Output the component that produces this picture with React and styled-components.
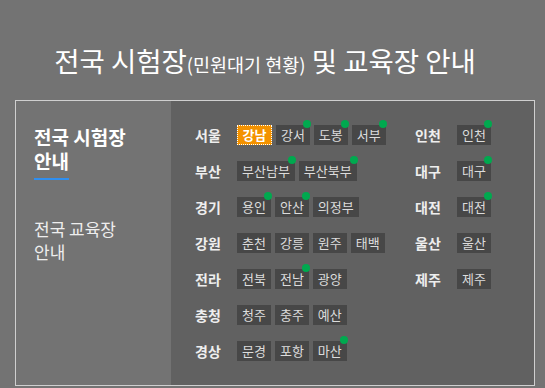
import React from "react";
import styled, { createGlobalStyle } from "styled-components";

const GlobalStyle = createGlobalStyle`
  html, body { margin: 0; padding: 0; }
  body {
    background: #737373;
    font-family: "Noto Sans CJK KR", "Noto Sans", sans-serif;
  }
`;

const Page = styled.div`
  width: 545px;
  height: 388px;
  padding: 0 10px 0 15px;
  box-sizing: border-box;
  overflow: hidden;
`;

const Title = styled.h1`
  margin: 0;
  height: 100px;
  padding: 43px 20px 0 0;
  box-sizing: border-box;
  text-align: center;
  font-size: 27.5px;
  font-weight: 400;
  line-height: 34px;
  color: #fff;
  white-space: nowrap;
`;

const Small = styled.span`
  font-size: 18.5px;
`;

const Box = styled.div`
  display: flex;
  width: 520px;
  height: 286px;
  box-sizing: border-box;
  border: 1px solid #cfcfcf;
`;

const Sidebar = styled.nav`
  width: 155px;
  flex: none;
  padding: 24px 0 0 18px;
  box-sizing: border-box;
  display: flex;
  flex-direction: column;
  gap: 37px;
`;

const MenuItem = styled.div`
  font-size: ${(p) => (p.$active ? "19px" : "17px")};
  font-weight: ${(p) => (p.$active ? 700 : 400)};
  line-height: ${(p) => (p.$active ? "24px" : "23px")};
  color: ${(p) => (p.$active ? "#fff" : "#eee")};
`;

const Underlined = styled.span`
  display: inline-block;
  line-height: 22px;
  padding-bottom: 6px;
  border-bottom: 2px solid #2f8ff0;
`;

const Panel = styled.div`
  flex: 1;
  background: #616161;
  padding: 24px 0 0 24px;
  display: flex;
`;

const Column = styled.div`
  width: ${(p) => p.$width || "auto"};
  display: flex;
  flex-direction: column;
  gap: 16px;
`;

const Region = styled.div`
  display: flex;
  align-items: center;
  height: 20px;
`;

const Label = styled.span`
  width: 42px;
  flex: none;
  font-size: 14px;
  font-weight: 700;
  color: #eee;
`;

const Chips = styled.div`
  display: flex;
  gap: 4px;
`;

const Chip = styled.span`
  position: relative;
  height: 20px;
  box-sizing: border-box;
  line-height: ${(p) => (p.$selected ? "18px" : "20px")};
  font-size: 13px;
  background: ${(p) => (p.$selected ? "#f39200" : "#474747")};
  color: ${(p) => (p.$selected ? "#fff" : "#dcdcdc")};
  font-weight: ${(p) => (p.$selected ? 700 : 400)};
  border: ${(p) => (p.$selected ? "1px dotted #fff" : "none")};
  padding: ${(p) => (p.$selected ? "0 4.5px" : "0 5px")};
`;

const Dot = styled.i`
  position: absolute;
  top: -5px;
  right: -1px;
  width: 8px;
  height: 8px;
  border-radius: 50%;
  background: #00a94f;
`;

const left = [
  ["서울", [["강남", 0, 1], ["강서", 1], ["도봉", 1], ["서부", 1]]],
  ["부산", [["부산남부", 1], ["부산북부", 1]]],
  ["경기", [["용인", 1], ["안산", 1], ["의정부", 0]]],
  ["강원", [["춘천"], ["강릉"], ["원주"], ["태백"]]],
  ["전라", [["전북"], ["전남", 1], ["광양"]]],
  ["충청", [["청주"], ["충주"], ["예산"]]],
  ["경상", [["문경"], ["포항"], ["마산", 1]]],
];

const right = [
  ["인천", [["인천", 1]]],
  ["대구", [["대구", 1]]],
  ["대전", [["대전", 1]]],
  ["울산", [["울산"]]],
  ["제주", [["제주"]]],
];

function RegionRow({ name, items }) {
  return (
    <Region>
      <Label>{name}</Label>
      <Chips>
        {items.map(([t, dot, sel]) => (
          <Chip key={t} $selected={!!sel}>
            {t}
            {dot ? <Dot /> : null}
          </Chip>
        ))}
      </Chips>
    </Region>
  );
}

export default function App() {
  return (
    <>
      <GlobalStyle />
      <Page>
        <Title>
          전국 시험장<Small>(민원대기 현황)</Small> 및 교육장 안내
        </Title>
        <Box>
          <Sidebar>
            <MenuItem $active>
              전국 시험장
              <br />
              <Underlined>안내</Underlined>
            </MenuItem>
            <MenuItem>
              전국 교육장
              <br />
              안내
            </MenuItem>
          </Sidebar>
          <Panel>
            <Column $width="220px">
              {left.map(([n, items]) => (
                <RegionRow key={n} name={n} items={items} />
              ))}
            </Column>
            <Column>
              {right.map(([n, items]) => (
                <RegionRow key={n} name={n} items={items} />
              ))}
            </Column>
          </Panel>
        </Box>
      </Page>
    </>
  );
}
